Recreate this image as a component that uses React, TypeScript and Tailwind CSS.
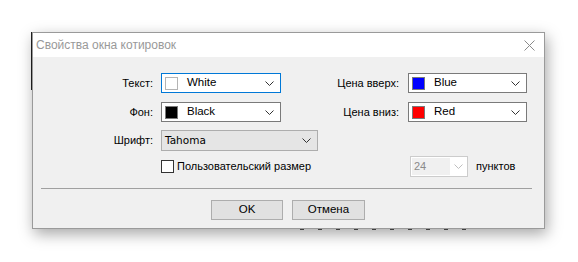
const font = { fontFamily: '"Liberation Sans", Arial, sans-serif' };

const Chevron = ({ color = "#333" }: { color?: string }) => (
  <svg width="9" height="5" viewBox="0 0 9 5" className="shrink-0">
    <path d="M0.5 0.5 L4.5 4.5 L8.5 0.5" fill="none" stroke={color} strokeWidth="1" />
  </svg>
);

const ColorCombo = ({
  swatch,
  name,
  focused,
  width,
}: {
  swatch: string;
  name: string;
  focused?: boolean;
  width: string;
}) => (
  <div
    className={`${width} h-[20px] flex items-center bg-white border pl-[3px] pr-[6px] ${
      focused ? "border-[#0078d7]" : "border-[#7a7a7a]"
    }`}
  >
    <div
      className={`w-[13px] h-[13px] border ${swatch === "#ffffff" ? "border-[#b4b4b4]" : "border-[#7a7a7a]"}`}
      style={{ backgroundColor: swatch }}
    />
    <span className="ml-[9px] flex-1 text-[11.5px] leading-none text-black">{name}</span>
    <Chevron />
  </div>
);

export default function App() {
  return (
    <div className="w-[578px] h-[262px] bg-white relative overflow-hidden" style={font}>
      <div className="absolute left-[31px] top-[32px] w-px h-[58px] bg-[#222]" />
      <div className="absolute left-[300px] top-[228px] flex gap-[14px]">
        {Array.from({ length: 10 }).map((_, i) => (
          <div key={i} className="w-[4px] h-[2px] bg-[#555]" />
        ))}
      </div>
      <div className="absolute left-[32px] top-[32px] w-[513px] h-[197px] border border-[#9a9a9a] bg-[#f0f0f0] shadow-[2px_5px_14px_rgba(0,0,0,0.35)] flex flex-col">
        <div className="h-[24px] bg-white flex items-center justify-between pl-[3px] pr-[9px]">
          <span className="text-[12px] text-[#999]">Свойства окна котировок</span>
          <svg width="11" height="11" viewBox="0 0 11 11">
            <path d="M0.5 0.5 L10.5 10.5 M10.5 0.5 L0.5 10.5" stroke="#8a8a8a" strokeWidth="1" />
          </svg>
        </div>

        <div className="flex flex-col pt-[16px] text-[11px] text-black">
          <div className="flex items-center h-[20px]">
            <span className="w-[120px] text-right">Текст:</span>
            <div className="ml-[8px]">
              <ColorCombo swatch="#ffffff" name="White" focused width="w-[120px]" />
            </div>
            <span className="w-[118px] text-right">Цена вверх:</span>
            <div className="ml-[9px]">
              <ColorCombo swatch="#0000ff" name="Blue" width="w-[119px]" />
            </div>
          </div>

          <div className="flex items-center h-[20px] mt-[9px]">
            <span className="w-[120px] text-right">Фон:</span>
            <div className="ml-[8px]">
              <ColorCombo swatch="#000000" name="Black" width="w-[120px]" />
            </div>
            <span className="w-[118px] text-right">Цена вниз:</span>
            <div className="ml-[9px]">
              <ColorCombo swatch="#ff0000" name="Red" width="w-[119px]" />
            </div>
          </div>

          <div className="flex items-center h-[21px] mt-[8px]">
            <span className="w-[120px] text-right">Шрифт:</span>
            <div className="ml-[8px] w-[157px] h-[21px] bg-[#e5e5e5] border border-[#adadad] flex items-center pl-[3px] pr-[6px]">
              <span className="flex-1 leading-none" style={{ fontFamily: '"DejaVu Sans", sans-serif', fontSize: "10.5px" }}>
                Tahoma
              </span>
              <Chevron />
            </div>
          </div>

          <div className="flex items-center h-[21px] mt-[5px]">
            <div className="ml-[128px] w-[13px] h-[13px] border border-[#333] bg-white" />
            <span className="ml-[3px] w-[233px]">Пользовательский размер</span>
            <div className="w-[58px] h-[21px] border border-[#cccccc] bg-white flex items-center p-[1px]">
              <div className="w-[38px] h-full bg-[#f0f0f0] flex items-center pl-[2px] text-[#8a8a8a]">24</div>
              <div className="flex-1 flex justify-center">
                <Chevron color="#bfbfbf" />
              </div>
            </div>
            <span className="ml-[8px]">пунктов</span>
          </div>

          <div className="ml-[8px] mr-[12px] mt-[11px] h-px bg-[#a0a0a0]" />

          <div className="flex mt-[11px] ml-[178px] gap-[9px]">
            <button className="w-[72px] h-[20px] bg-[#e1e1e1] border border-[#adadad] text-[11.5px] leading-none">OK</button>
            <button className="w-[73px] h-[20px] bg-[#e1e1e1] border border-[#adadad] text-[11.5px] leading-none">Отмена</button>
          </div>
        </div>
      </div>
    </div>
  );
}
